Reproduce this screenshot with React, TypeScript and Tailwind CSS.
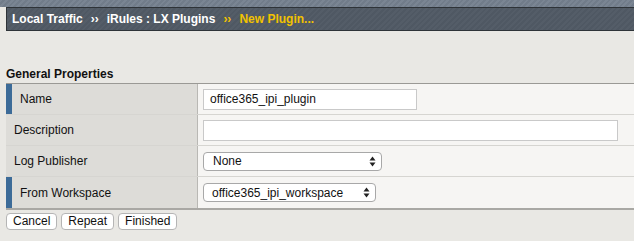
import React from 'react'

function Arrows() {
  return (
    <svg width="7" height="11" viewBox="0 0 7 11" className="shrink-0">
      <path d="M3.5 0.5 L6.5 4.5 L0.5 4.5 Z" fill="#222" />
      <path d="M3.5 10.5 L6.5 6.5 L0.5 6.5 Z" fill="#222" />
    </svg>
  )
}

function Row({
  label,
  required,
  children,
  last,
}: {
  label: string
  required?: boolean
  children: React.ReactNode
  last?: boolean
}) {
  return (
    <div className={`flex h-[31px] ${last ? '' : 'border-b border-[#d6d5d1]'}`}>
      <div className="flex w-[192px] shrink-0 items-center border-r border-[#b9b8b4] bg-[#dddcd8]">
        {required ? <div className="h-full w-[6px] bg-[#3c6b98]" /> : null}
        <span className="pl-[8px]">{label}</span>
      </div>
      <div className="flex flex-1 items-center bg-[#f6f5f3] pl-[5px]">{children}</div>
    </div>
  )
}

export default function App() {
  return (
    <div
      className="h-[241px] w-[634px] overflow-hidden bg-[#e9e8e4] text-[12px] text-[#111]"
      style={{ fontFamily: '"Liberation Sans", Arial, sans-serif' }}
    >
      {/* top band */}
      <div className="h-[7px] bg-[#76818f] bg-[repeating-linear-gradient(135deg,#7a8593_0px,#7a8593_2px,#717c8a_2px,#717c8a_4px)]" />
      <div className="ml-[6px] flex h-[24px] items-center border border-r-0 border-[#2e3338] bg-[#525b66] bg-[repeating-linear-gradient(135deg,#545d68_0px,#545d68_2px,#4f5863_2px,#4f5863_4px)] pl-[5px] font-bold text-white">
        <span>Local Traffic</span>
        <span className="mx-[8px]">››</span>
        <span>iRules : LX Plugins</span>
        <span className="mx-[8px] text-[#f2c200]">››</span>
        <span className="text-[#f2c200]">New Plugin...</span>
      </div>

      <div className="pl-[6px]">
        <div className="mt-[36px] mb-[2px] font-bold leading-[14px]">General Properties</div>
        <div className="border-t border-b-2 border-t-[#9a9995] border-b-[#a9a8a4]">
          <Row label="Name" required>
            <div className="flex h-[21px] w-[214px] items-center border border-[#c9c9c9] bg-white pl-[6px] text-[12px]">
              office365_ipi_plugin
            </div>
          </Row>
          <Row label="Description">
            <div className="h-[21px] w-[415px] border border-[#c9c9c9] bg-white" />
          </Row>
          <Row label="Log Publisher">
            <div className="flex h-[19px] w-[179px] items-center justify-between rounded-[4px] border border-[#a8a8a8] bg-white pr-[5px] pl-[9px]">
              <span>None</span>
              <Arrows />
            </div>
          </Row>
          <Row label="From Workspace" required last>
            <div className="flex h-[19px] w-[173px] items-center justify-between rounded-[4px] border border-[#a8a8a8] bg-white pr-[5px] pl-[8px]">
              <span>office365_ipi_workspace</span>
              <Arrows />
            </div>
          </Row>
        </div>
        <div className="mt-[3px] flex gap-[4px]">
          {['Cancel', 'Repeat', 'Finished'].map((b) => (
            <button
              key={b}
              className="h-[17px] rounded-[4px] border border-[#b5b5b5] bg-white px-[6px] text-[12px] leading-[15px] text-[#111]"
            >
              {b}
            </button>
          ))}
        </div>
      </div>
    </div>
  )
}
